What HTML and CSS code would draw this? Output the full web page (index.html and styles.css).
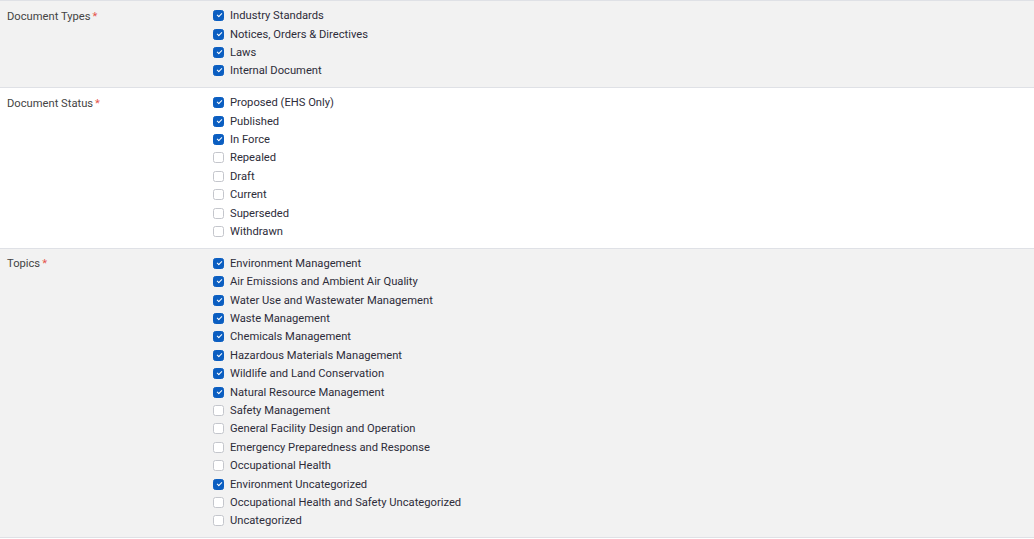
FILE: index.html
```html
<!DOCTYPE html>
<html>
<head>
<meta charset="utf-8">
<link rel="stylesheet" href="styles.css">
</head>
<body>
<div class="form">
  <div class="section gray">
    <div class="label">Document Types<span class="req">*</span></div>
    <div class="options">
      <label class="opt"><span class="box on"></span>Industry Standards</label>
      <label class="opt"><span class="box on"></span>Notices, Orders &amp; Directives</label>
      <label class="opt"><span class="box on"></span>Laws</label>
      <label class="opt"><span class="box on"></span>Internal Document</label>
    </div>
  </div>
  <div class="section">
    <div class="label">Document Status<span class="req">*</span></div>
    <div class="options">
      <label class="opt"><span class="box on"></span>Proposed (EHS Only)</label>
      <label class="opt"><span class="box on"></span>Published</label>
      <label class="opt"><span class="box on"></span>In Force</label>
      <label class="opt"><span class="box"></span>Repealed</label>
      <label class="opt"><span class="box"></span>Draft</label>
      <label class="opt"><span class="box"></span>Current</label>
      <label class="opt"><span class="box"></span>Superseded</label>
      <label class="opt"><span class="box"></span>Withdrawn</label>
    </div>
  </div>
  <div class="section gray">
    <div class="label">Topics<span class="req">*</span></div>
    <div class="options">
      <label class="opt"><span class="box on"></span>Environment Management</label>
      <label class="opt"><span class="box on"></span>Air Emissions and Ambient Air Quality</label>
      <label class="opt"><span class="box on"></span>Water Use and Wastewater Management</label>
      <label class="opt"><span class="box on"></span>Waste Management</label>
      <label class="opt"><span class="box on"></span>Chemicals Management</label>
      <label class="opt"><span class="box on"></span>Hazardous Materials Management</label>
      <label class="opt"><span class="box on"></span>Wildlife and Land Conservation</label>
      <label class="opt"><span class="box on"></span>Natural Resource Management</label>
      <label class="opt"><span class="box"></span>Safety Management</label>
      <label class="opt"><span class="box"></span>General Facility Design and Operation</label>
      <label class="opt"><span class="box"></span>Emergency Preparedness and Response</label>
      <label class="opt"><span class="box"></span>Occupational Health</label>
      <label class="opt"><span class="box on"></span>Environment Uncategorized</label>
      <label class="opt"><span class="box"></span>Occupational Health and Safety Uncategorized</label>
      <label class="opt"><span class="box"></span>Uncategorized</label>
    </div>
  </div>
</div>
</body>
</html>
```
FILE: styles.css
```css
html, body {
  margin: 0;
  padding: 0;
  background: #ffffff;
}
body {
  font-family: Roboto, "Liberation Sans", sans-serif;
  font-size: 11.2px;
  color: #333;
}
.form {
  border-top: 1px solid #dfe1e6;
}
.section {
  display: flex;
  padding: 5.5px 0 7px 0;
  border-bottom: 1px solid #dfe1e6;
  background: #ffffff;
}
.section.gray {
  background: #f2f2f2;
}
.label {
  width: 213px;
  padding-left: 7px;
  padding-top: 1px;
  box-sizing: border-box;
  line-height: 18.4px;
  color: #444;
}
.req {
  color: #e5534b;
  margin-left: 2px;
}
.options {
  display: flex;
  flex-direction: column;
}
.opt {
  display: flex;
  align-items: center;
  height: 18.4px;
  color: #2e2d3a;
}
.box {
  width: 11px;
  height: 11px;
  box-sizing: border-box;
  border: 1px solid #c4c6cc;
  border-radius: 2.5px;
  background: #fff;
  margin-right: 6px;
  position: relative;
}
.box.on {
  background: #0b5ec1;
  border-color: #0b5ec1;
}
.box.on::after {
  content: "";
  position: absolute;
  left: 3px;
  top: 2px;
  width: 4px;
  height: 2px;
  border-left: 1.5px solid #fff;
  border-bottom: 1.5px solid #fff;
  transform: rotate(-45deg);
}
```
